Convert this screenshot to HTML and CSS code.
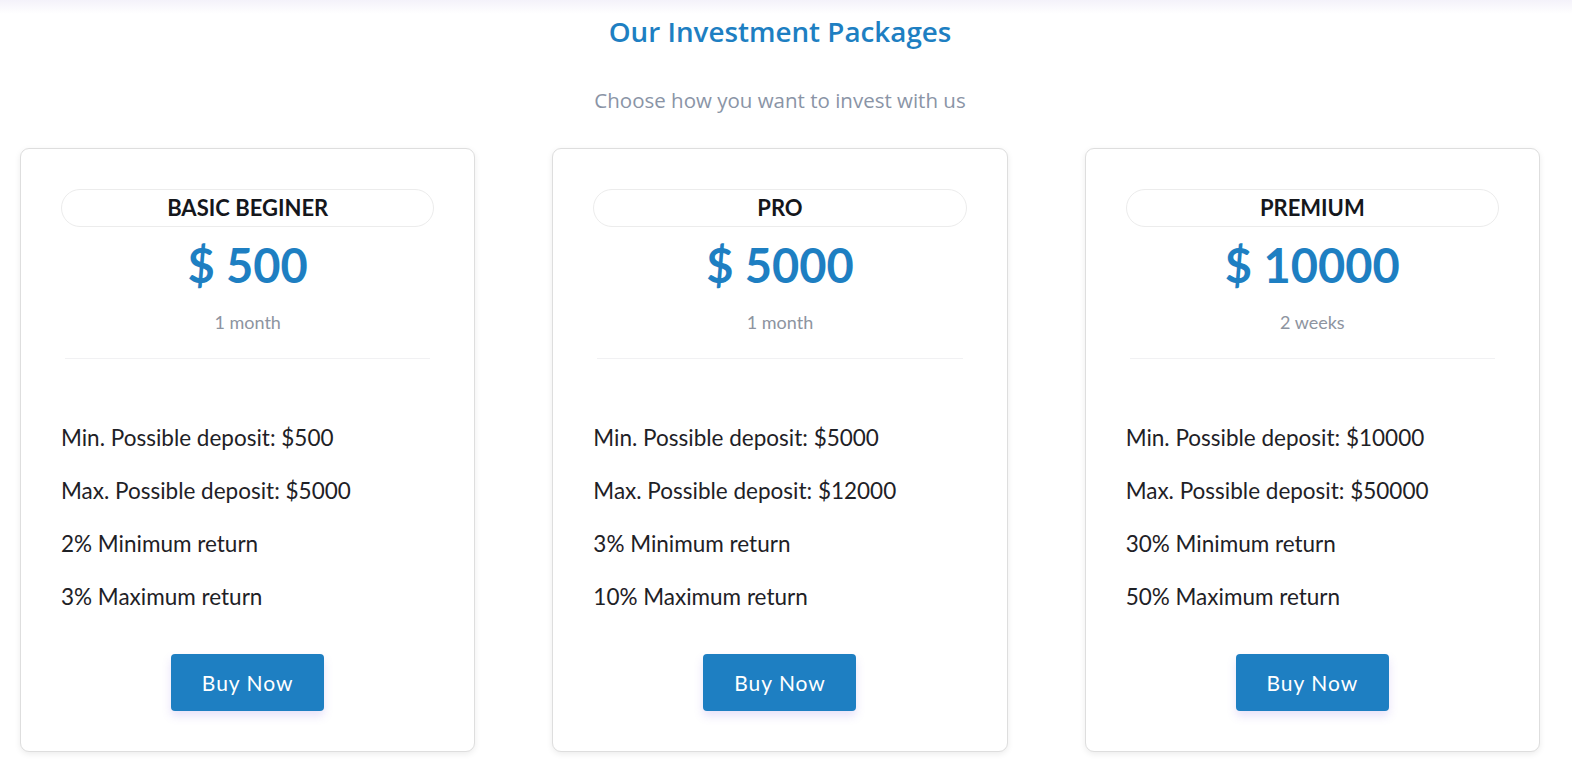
FILE: index.html
```html
<!DOCTYPE html>
<html>
<head>
<title>Investment Packages</title>
<link rel="stylesheet" href="styles.css">
</head>
<body>
	<div class="topfade"></div>
	<section class="packages">
		<h2 class="packages-title">Our Investment Packages</h2>
		<p class="packages-sub">Choose how you want to invest with us</p>

		<div class="plans">
			<div class="plan">
				<div class="plan-name">BASIC BEGINER</div>
				<div class="plan-price">$ 500</div>
				<div class="plan-term">1 month</div>
				<hr class="plan-line">
				<ul class="plan-list">
					<li>Min. Possible deposit: $500</li>
					<li>Max. Possible deposit: $5000</li>
					<li>2% Minimum return</li>
					<li>3% Maximum return</li>
				</ul>
				<a class="plan-buy" href="#">Buy Now</a>
			</div>

			<div class="plan">
				<div class="plan-name">PRO</div>
				<div class="plan-price">$ 5000</div>
				<div class="plan-term">1 month</div>
				<hr class="plan-line">
				<ul class="plan-list">
					<li>Min. Possible deposit: $5000</li>
					<li>Max. Possible deposit: $12000</li>
					<li>3% Minimum return</li>
					<li>10% Maximum return</li>
				</ul>
				<a class="plan-buy" href="#">Buy Now</a>
			</div>

			<div class="plan">
				<div class="plan-name">PREMIUM</div>
				<div class="plan-price">$ 10000</div>
				<div class="plan-term">2 weeks</div>
				<hr class="plan-line">
				<ul class="plan-list">
					<li>Min. Possible deposit: $10000</li>
					<li>Max. Possible deposit: $50000</li>
					<li>30% Minimum return</li>
					<li>50% Maximum return</li>
				</ul>
				<a class="plan-buy" href="#">Buy Now</a>
			</div>
		</div>
	</section>
</body>
</html>
```

FILE: styles.css
```css
body
{
	margin: 0;
	background-color: #fff;
	font-family: Lato, "Noto Sans", sans-serif;
	color: #212529;
}

.topfade
{
	height: 14px;
	background: linear-gradient(#f4f2fa, #fff);
}

.packages
{
	padding: 0 32px 20px 20px;
	margin-top: -14px;
}

.packages-title
{
	margin: 0;
	padding-top: 12px;
	text-align: center;
	font-family: "Open Sans", sans-serif;
	font-weight: 600;
	font-size: 27.8px;
	line-height: 38px;
	color: #1e7fc2;
}

.packages-sub
{
	margin: 36px 0 0 0;
	text-align: center;
	font-family: "Open Sans", sans-serif;
	font-size: 20.5px;
	line-height: 28px;
	color: #8a94a6;
}

.plans
{
	display: grid;
	grid-template-columns: repeat(3, 1fr);
	gap: 77px;
	margin-top: 34px;
}

.plan
{
	background: #fff;
	border: 1px solid #dedede;
	border-radius: 9px;
	box-shadow: 0 2px 6px rgba(0, 0, 0, 0.08);
	padding: 40px 40px 40px 40px;
	display: flex;
	flex-direction: column;
}

.plan-name
{
	height: 36px;
	line-height: 36px;
	border: 1px solid #ececec;
	border-radius: 19px;
	text-align: center;
	font-weight: 700;
	font-size: 22px;
	color: #15171c;
}

.plan-price
{
	margin-top: 10px;
	text-align: center;
	font-weight: 700;
	font-size: 47px;
	line-height: 56px;
	color: #1e7fc2;
}

.plan-term
{
	margin-top: 17px;
	text-align: center;
	font-size: 18px;
	line-height: 24px;
	color: #8d94a0;
}

.plan-line
{
	margin: 24px 4px 0 4px;
	border: 0;
	border-top: 1px solid #f1f1f3;
}

.plan-list
{
	list-style: none;
	margin: 66px 0 0 0;
	padding: 0;
}

.plan-list li
{
	font-size: 22.5px;
	line-height: 26px;
	margin-bottom: 27px;
	color: #1e2126;
}

.plan-buy
{
	align-self: center;
	margin-top: 17px;
	width: 153px;
	height: 57px;
	line-height: 57px;
	text-align: center;
	background: #1e7fc2;
	color: #fff;
	text-decoration: none;
	border-radius: 4px;
	font-size: 21px;
	letter-spacing: 1px;
	box-shadow: 0 5px 10px rgba(120, 90, 220, 0.18);
}
```
